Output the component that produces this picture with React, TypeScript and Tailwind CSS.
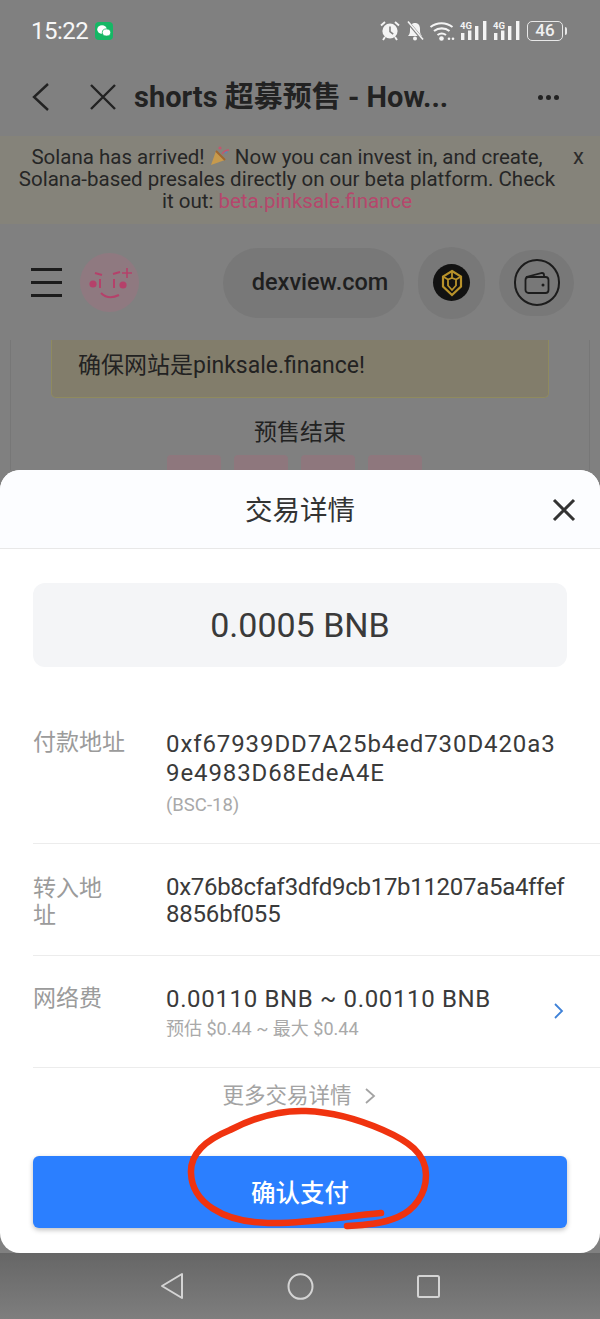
const cjk = { fontFamily: 'Roboto, "Noto Sans CJK SC", sans-serif' }

function Signal() {
  return (
    <>
      <text x="0" y="9" fontSize="9.5" fontWeight="700" fill="currentColor" fontFamily="Roboto, sans-serif">4G</text>
      <path d="M1 13h3.4v7H1zM8 10.5h3.4V20H8zM15 6h3.4v14H15zM23 1h3.4v19H23z" fill="currentColor" />
    </>
  )
}

function StatusIcons() {
  return (
    <svg width="141" height="21" viewBox="0 0 141 21" fill="none" className="text-[#f4f4f4]">
      {/* alarm */}
      <circle cx="10" cy="11" r="7.6" fill="currentColor" />
      <path d="M10 6.5v5l3.2 2.6" stroke="#808080" strokeWidth="1.6" />
      <path d="M1 5.5l4-3.5M19 5.5l-4-3.5M5 17l-2 3M15 17l2 3" stroke="currentColor" strokeWidth="1.9" />
      {/* muted bell */}
      <path d="M28 16c2-2 2-3.500 2-7 0-4 2-6 5-6s5 2 5 6c0 3.500 0 5 2 7z" fill="currentColor" />
      <circle cx="35" cy="18.500" r="2" fill="currentColor" />
      <path d="M27 1l16 19" stroke="#808080" strokeWidth="3" />
      <path d="M28 1.500l15 18" stroke="currentColor" strokeWidth="1.6" />
      {/* wifi */}
      <path d="M50.500 7c6.500-5 15.500-5 22 0M54 11c4.500-3.500 11-3.500 15.500 0M57.500 15c2.500-1.800 6-1.800 8.500 0" stroke="currentColor" strokeWidth="2.1" />
      <circle cx="61.500" cy="18.500" r="2.300" fill="currentColor" />
      <circle cx="69" cy="18.800" r="1.300" fill="currentColor" />
      <circle cx="73" cy="18.800" r="1.300" fill="currentColor" />
      {/* signal bars */}
      <g transform="translate(80 0)"><Signal /></g>
      <g transform="translate(113 0)"><Signal /></g>
    </svg>
  )
}

function Scribble() {
  return (
    <svg className="absolute left-0 top-0 pointer-events-none" width="600" height="1319" viewBox="0 0 600 1319" fill="none">
      <path
        d="M381 1213C345 1216 310 1224 268 1223C222 1222 192 1202 191 1173C190 1152 208 1139 230 1130C255 1117 280 1110 306 1111C335 1112 360 1120 383 1130C408 1141 426 1153 426 1175C426 1195 414 1210 398 1217C382 1224 364 1225 347 1226"
        stroke="#f0330f"
        strokeWidth="6.500"
        strokeLinecap="round"
      />
    </svg>
  )
}

function Row({ label, children, className = '' }: { label: React.ReactNode; children: React.ReactNode; className?: string }) {
  return (
    <div className={`flex border-b border-[#ececec] ${className}`}>
      <div className="w-[133px] shrink-0 text-[23px] leading-[27px] text-[#9b9b9b]">{label}</div>
      <div className="min-w-0 flex-1 pr-[33px] text-[24px] leading-[29px] text-[#3a3a3a]">{children}</div>
    </div>
  )
}

export default function App() {
  return (
    <div className="relative flex h-[1319px] w-[600px] flex-col overflow-hidden bg-[#808080]" style={cjk}>
      {/* status bar */}
      <div className="flex h-[61px] items-center justify-between pl-[31px] pr-[33px]">
        <div className="flex items-center gap-[7px]">
          <span className="text-[24px] leading-none tracking-[-0.5px] text-[#f7f7f7]">15:22</span>
          <span className="flex h-[18px] w-[18px] items-center justify-center rounded-[4px] bg-[#16b765]">
            <svg width="14" height="12" viewBox="0 0 14 12" fill="#fff">
              <ellipse cx="5" cy="4.500" rx="4.800" ry="4.200" />
              <ellipse cx="9.500" cy="7.500" rx="4.200" ry="3.600" stroke="#16b765" strokeWidth="0.8" />
            </svg>
          </span>
        </div>
        <div className="flex items-center gap-[6px]">
          <StatusIcons />
          <span className="flex h-[20px] w-[36px] items-center justify-center rounded-[5px] border-[1.5px] border-[#e8e8e8] text-[17px] font-medium leading-none text-[#f0f0f0]">46</span>
          <span className="-ml-[4px] h-[8px] w-[2px] rounded-r bg-[#e8e8e8]" />
        </div>
      </div>

      {/* browser toolbar */}
      <div className="flex h-[75px] items-center pb-[3px] pl-[31px] pr-[41px]">
        <svg width="20" height="32" viewBox="0 0 20 32" fill="none" stroke="#222" strokeWidth="2.400">
          <path d="M17 3L3 16l14 13" />
        </svg>
        <svg className="ml-[38px]" width="28" height="28" viewBox="0 0 28 28" fill="none" stroke="#222" strokeWidth="2.400">
          <path d="M2 2l24 24M26 2L2 26" />
        </svg>
        <span className="ml-[17px] whitespace-nowrap text-[29px] font-bold leading-none text-[#222]">shorts 超募预售 - How...</span>
        <div className="ml-auto flex gap-[3px]">
          <span className="h-[5px] w-[5px] rounded-full bg-[#222]" />
          <span className="h-[5px] w-[5px] rounded-full bg-[#222]" />
          <span className="h-[5px] w-[5px] rounded-full bg-[#222]" />
        </div>
      </div>

      {/* announcement */}
      <div className="relative h-[88px] bg-[#85837a] pl-[14px] pr-[40px] pt-[9px] text-center text-[20.5px] leading-[22px] text-[#262626]">
        <p>
          Solana has arrived!{' '}
          <svg className="inline-block align-[-3px]" width="20" height="22" viewBox="0 0 20 22">
            <path d="M1 20l5-14 9 9z" fill="#c79a4c" />
            <path d="M6 6l9 9" stroke="#a0662e" strokeWidth="2" />
            <circle cx="10" cy="3" r="1.600" fill="#c2566e" />
            <circle cx="16" cy="7" r="1.600" fill="#5e86b0" />
            <path d="M12 9c2-3 4-4 7-4" stroke="#c2566e" strokeWidth="1.500" fill="none" />
          </svg>{' '}
          Now you can invest in, and create, Solana-based presales directly on our beta platform. Check it out:{' '}
          <span className="text-[#b5476c]">beta.pinksale.finance</span>
        </p>
        <span className="absolute right-[16px] top-[10px] text-[22px] leading-none text-[#2c2c2c]">x</span>
      </div>

      {/* site header */}
      <div className="flex h-[116px] items-center pl-[31px] pr-[26px] pt-[1px]">
        <div className="flex w-[31px] flex-col gap-[10px]">
          <span className="h-[3px] bg-[#1c1c1c]" />
          <span className="h-[3px] bg-[#1c1c1c]" />
          <span className="h-[3px] bg-[#1c1c1c]" />
        </div>
        <div className="ml-[18px] flex h-[59px] w-[59px] items-center justify-center rounded-full bg-[#8f7980]">
          <svg width="46" height="36" viewBox="0 0 46 36" fill="none" stroke="#b5416a" strokeWidth="2">
            <circle cx="6" cy="19" r="3.600" fill="#b5416a" stroke="none" />
            <circle cx="36" cy="20" r="3.600" fill="#b5416a" stroke="none" />
            <path d="M13 14v9M27 14v9M8 8l7 2M26 9l7-2M14 28c5 5 12 5 18 2" />
            <path d="M40 3v10M35 8h10" strokeWidth="1.600" />
          </svg>
        </div>
        <div className="ml-auto flex items-center gap-[14px]">
          <div className="flex h-[70px] w-[181px] items-center justify-center rounded-full bg-[#787878] pl-[13px] text-[23.500px] font-medium text-[#1f1f1f]">dexview.com</div>
          <div className="flex h-[72px] w-[67px] items-center justify-center rounded-full bg-[#787878]">
            <div className="flex h-[37px] w-[37px] items-center justify-center rounded-full bg-[#121212]">
              <svg width="26" height="28" viewBox="0 0 26 28" fill="none" stroke="#b8922a" strokeWidth="2.200">
                <path d="M13 2l9 5.500v10L13 26l-9-8.500v-10z" />
                <path d="M13 2v7M4 7.500l5 3M22 7.500l-5 3M9 10.500l4-1.500 4 1.500v6L13 21l-4-4.500z" strokeWidth="1.800" />
              </svg>
            </div>
          </div>
          <div className="flex h-[66px] w-[75px] items-center justify-center rounded-full bg-[#787878]">
            <div className="flex h-[47px] w-[46px] items-center justify-center rounded-full border-2 border-[#1c1c1c]">
              <svg width="26" height="24" viewBox="0 0 26 24" fill="none" stroke="#1c1c1c" strokeWidth="1.800">
                <path d="M2 6l16-4c1 0 2 1 2 2v2" />
                <rect x="1.500" y="6" width="23" height="16" rx="3" />
                <circle cx="19" cy="14" r="1.500" fill="#1c1c1c" stroke="none" />
              </svg>
            </div>
          </div>
        </div>
      </div>

      {/* page behind the sheet */}
      <div className="mx-[10px] flex h-[130px] flex-col items-center overflow-hidden border-x border-[#777] bg-[#808080]">
        <div className="flex h-[58px] w-[498px] shrink-0 items-center rounded-b-[5px] border-x border-b border-[#8f8a5e] bg-[#827d6b] pb-[4px] pl-[26px] text-[23px] text-[#222]">
          确保网站是pinksale.finance!
        </div>
        <p className="mt-[17px] text-[23px] leading-[36px] text-[#222]">预售结束</p>
        <div className="mt-[4px] flex gap-[13px] pr-[12px]">
          <span className="h-[20px] w-[54px] rounded-[4px] bg-[#8e777d]" />
          <span className="h-[20px] w-[54px] rounded-[4px] bg-[#8e777d]" />
          <span className="h-[20px] w-[54px] rounded-[4px] bg-[#8e777d]" />
          <span className="h-[20px] w-[54px] rounded-[4px] bg-[#8e777d]" />
        </div>
      </div>

      {/* transaction sheet */}
      <div className="flex h-[783px] flex-col rounded-[20px] bg-white">
        <div className="relative flex h-[79px] shrink-0 items-center justify-center rounded-t-[20px] border-b border-[#e8e8e8] bg-[#fcfdff] pt-[3px] text-[27.500px] text-[#333]">
          交易详情
          <svg className="absolute right-[24px] top-[28px]" width="24" height="24" viewBox="0 0 24 24" fill="none" stroke="#333" strokeWidth="3">
            <path d="M2 2l20 20M22 2L2 22" />
          </svg>
        </div>
        <div className="mx-[33px] mt-[34px] flex h-[84px] shrink-0 items-center justify-center rounded-[12px] bg-[#f4f5f7] text-[34px] text-[#3a3a3a]">
          0.0005 BNB
        </div>
        <div className="ml-[33px] mt-[60px] flex flex-col">
          <Row label={<span className="block pt-[2px]">付款地址</span>} className="h-[117px]">
            <div className="pt-[3px] tracking-[0.9px]">
              0xf67939DD7A25b4ed730D420a3
              <br />
              9e4983D68EdeA4E
            </div>
            <div className="mt-[7px] text-[18.500px] leading-[21px] text-[#a9a9a9]">(BSC-18)</div>
          </Row>
          <Row label={<span className="block w-[80px] pt-[1px]">转入地址</span>} className="h-[112px] pt-[30px]">
            <div className="-mt-[1px] whitespace-nowrap tracking-[-0.3px]">0x76b8cfaf3dfd9cb17b11207a5a4ffef</div>
            <div className="-mt-[2px] tracking-[-0.2px]">8856bf055</div>
          </Row>
          <Row label="网络费" className="relative h-[112px] pt-[29px]">
            <div className="tracking-[0.65px]">0.00110 BNB ~ 0.00110 BNB</div>
            <div className="pt-[2px] text-[18px] leading-[25px] text-[#a9a9a9]">预估 $0.44 ~ 最大 $0.44</div>
            <svg className="absolute right-[36px] top-[46px]" width="11" height="18" viewBox="0 0 11 18" fill="none" stroke="#3f82d8" strokeWidth="1.800">
              <path d="M2 2l7 7-7 7" />
            </svg>
          </Row>
        </div>
        <div className="mt-[15px] flex items-center justify-center gap-[12px] pr-[2px] text-[21.500px] leading-[26px] text-[#a3a3a3]">
          更多交易详情
          <svg width="12" height="18" viewBox="0 0 12 18" fill="none" stroke="#a3a3a3" strokeWidth="1.800">
            <path d="M2 2l8 7-8 7" />
          </svg>
        </div>
        <button className="mx-[33px] mt-[47px] flex h-[72px] shrink-0 items-center justify-center rounded-[6px] bg-[#2b7fff] pt-[4px] text-[24.500px] font-medium text-white shadow-[0_2px_5px_rgba(0,0,0,0.25)]">
          确认支付
        </button>
      </div>

      {/* android nav */}
      <div className="flex flex-1 items-center justify-center gap-[102px] bg-gradient-to-b from-[#666666] to-[#7e7e7e]">
        <svg width="25" height="28" viewBox="0 0 25 28" fill="none" stroke="#d4d4d4" strokeWidth="2" strokeLinejoin="round">
          <path d="M22 2v24L2 14z" />
        </svg>
        <svg width="27" height="27" viewBox="0 0 27 27" fill="none" stroke="#d4d4d4" strokeWidth="2">
          <ellipse cx="13.500" cy="13.500" rx="12" ry="12.300" />
        </svg>
        <svg width="25" height="25" viewBox="0 0 25 25" fill="none" stroke="#d4d4d4" strokeWidth="2">
          <rect x="2" y="2" width="21" height="21" rx="1.500" />
        </svg>
      </div>

      <Scribble />
    </div>
  )
}
